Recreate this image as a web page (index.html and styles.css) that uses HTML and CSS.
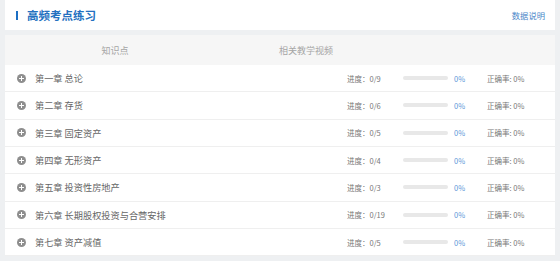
FILE: index.html
```html
<!DOCTYPE html>
<html lang="zh-CN">
<head>
	<meta charset="UTF-8">
	<title>高频考点练习</title>
	<link rel="stylesheet" href="styles.css">
</head>
<body>
	<div id="page">
		<div class="head">
			<span class="bar"></span>
			<h2 class="title">高频考点练习</h2>
			<a class="help" href="#">数据说明</a>
		</div>
		<div class="panel">
			<div class="thead">
				<span class="th-point">知识点</span>
				<span class="th-video">相关教学视频</span>
			</div>
			<ul class="list">
				<li class="row">
					<span class="chap"><i class="plus"></i>第一章 总论</span>
					<span class="prog">进度：0/9</span>
					<span class="track"></span>
					<span class="pct">0%</span>
					<span class="acc">正确率: 0%</span>
				</li>
				<li class="row">
					<span class="chap"><i class="plus"></i>第二章 存货</span>
					<span class="prog">进度：0/6</span>
					<span class="track"></span>
					<span class="pct">0%</span>
					<span class="acc">正确率: 0%</span>
				</li>
				<li class="row">
					<span class="chap"><i class="plus"></i>第三章 固定资产</span>
					<span class="prog">进度：0/5</span>
					<span class="track"></span>
					<span class="pct">0%</span>
					<span class="acc">正确率: 0%</span>
				</li>
				<li class="row">
					<span class="chap"><i class="plus"></i>第四章 无形资产</span>
					<span class="prog">进度：0/4</span>
					<span class="track"></span>
					<span class="pct">0%</span>
					<span class="acc">正确率: 0%</span>
				</li>
				<li class="row">
					<span class="chap"><i class="plus"></i>第五章 投资性房地产</span>
					<span class="prog">进度：0/3</span>
					<span class="track"></span>
					<span class="pct">0%</span>
					<span class="acc">正确率: 0%</span>
				</li>
				<li class="row">
					<span class="chap"><i class="plus"></i>第六章 长期股权投资与合营安排</span>
					<span class="prog">进度：0/19</span>
					<span class="track"></span>
					<span class="pct">0%</span>
					<span class="acc">正确率: 0%</span>
				</li>
				<li class="row">
					<span class="chap"><i class="plus"></i>第七章 资产减值</span>
					<span class="prog">进度：0/5</span>
					<span class="track"></span>
					<span class="pct">0%</span>
					<span class="acc">正确率: 0%</span>
				</li>
			</ul>
		</div>
	</div>
</body>
</html>
```
FILE: styles.css
```css
*{
	margin: 0;
	padding: 0;
}
ul{
	list-style: none;
}
body{
	background: #eef0f2;
	font-family: "Noto Sans CJK SC", "Liberation Sans", sans-serif;
	color: #666;
}
#page{
	padding: 0 5px;
}
.head{
	height: 30px;
	background: #fff;
	display: flex;
	align-items: center;
	padding: 0 10px 0 11px;
}
.head .bar{
	width: 2px;
	height: 9px;
	background: #1c6fc4;
	margin-right: 9px;
}
.title{
	font-size: 11.5px;
	font-weight: bold;
	color: #2370c0;
	flex: 1;
}
.help{
	font-size: 8.3px;
	color: #4a86c8;
	text-decoration: none;
}
.panel{
	margin-top: 5px;
	background: #fff;
}
.thead{
	height: 30px;
	background: #f6f6f6;
	display: flex;
	align-items: center;
	font-size: 9px;
	color: #a5a5a5;
}
.th-point{
	width: 220px;
	text-align: center;
}
.th-video{
	width: 162px;
	text-align: center;
}
.row{
	height: 27.33px;
	box-sizing: border-box;
	border-bottom: 1px solid #efefef;
	display: flex;
	align-items: center;
	padding-left: 12px;
	font-size: 7.5px;
	color: #777;
}
.chap{
	width: 330px;
	display: flex;
	align-items: center;
	font-size: 9.2px;
	color: #666;
}
.plus{
	position: relative;
	width: 9px;
	height: 9px;
	border-radius: 50%;
	background: #8e8e8e;
	margin-right: 9px;
}
.plus:before,.plus:after{
	content: "";
	position: absolute;
	background: #fff;
	left: 2px;
	top: 4px;
	width: 5px;
	height: 1px;
}
.plus:after{
	left: 4px;
	top: 2px;
	width: 1px;
	height: 5px;
}
.prog{
	width: 56px;
}
.track{
	width: 45px;
	height: 4px;
	border-radius: 2px;
	background: #e8e8e8;
	margin-right: 6px;
}
.pct{
	width: 33px;
	color: #5a96d8;
}
```
